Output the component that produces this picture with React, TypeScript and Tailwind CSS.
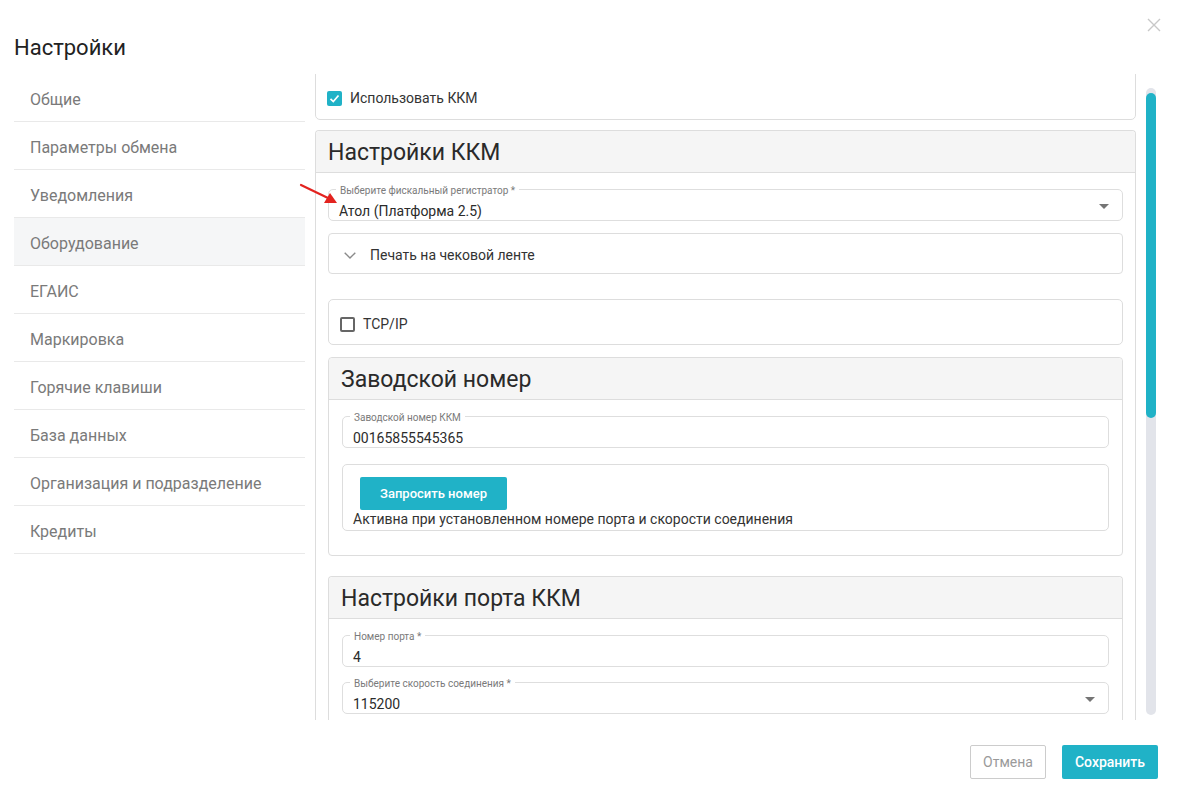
import React from "react";

const TEAL = "bg-[#20b2c7]";

function Field({ label, value, select }: { label: string; value: string; select?: boolean }) {
  return (
    <div className="relative h-[32px] rounded-[5px] border border-[#dedede] flex items-end pb-[1px] pl-[10px]">
      <span className="absolute -top-[5px] left-[7px] bg-white px-[4px] text-[10px] leading-[12px] text-[#7a7a7a]">
        {label}
      </span>
      <span className="text-[14px] leading-[16px] text-[#2b2b2b]">{value}</span>
      {select && (
        <svg className="absolute right-[13px] top-[14px]" width="10" height="5" viewBox="0 0 10 5">
          <path d="M0 0 L10 0 L5 5 Z" fill="#757575" />
        </svg>
      )}
    </div>
  );
}

function Card({ title, children, className = "" }: { title: string; children: React.ReactNode; className?: string }) {
  return (
    <div className={"rounded-[4px] border border-[#dddddd] " + className}>
      <div className="h-[42px] bg-[#f5f5f5] border-b border-[#dddddd] flex items-center pl-[12px] pt-[2px] rounded-t-[4px]">
        <span className="text-[23px] leading-[28px] text-[#2a2a2a]">{title}</span>
      </div>
      {children}
    </div>
  );
}

export default function App() {
  const items = [
    "Общие",
    "Параметры обмена",
    "Уведомления",
    "Оборудование",
    "ЕГАИС",
    "Маркировка",
    "Горячие клавиши",
    "База данных",
    "Организация и подразделение",
    "Кредиты",
  ];
  return (
    <div className="relative w-[1179px] h-[800px] bg-white font-['Roboto',sans-serif] text-[#2b2b2b] overflow-hidden">
      {/* Header */}
      <div className="h-[74px] pl-[14px] pt-[34px]">
        <h1 className="text-[22px] leading-[28px] text-[#222]">Настройки</h1>
      </div>
      <button className="absolute left-[1147px] top-[18px] w-[14px] h-[14px]">
        <svg width="14" height="14" viewBox="0 0 14 14">
          <path d="M1 1 L13 13 M13 1 L1 13" stroke="#c8c8c8" strokeWidth="1.4" />
        </svg>
      </button>

      {/* Body */}
      <div className="flex h-[646px]">
        {/* Sidebar */}
        <div className="ml-[14px] w-[291px] shrink-0">
          {items.map((it, i) => (
            <div
              key={it}
              className={
                "h-[48px] border-b border-[#e9e9e9] flex items-center pl-[16px] pt-[4px] text-[16px] text-[#7a7a7a] " +
                (i === 3 ? "bg-[#f5f6f7]" : "")
              }
            >
              {it}
            </div>
          ))}
        </div>

        {/* Content */}
        <div className="relative ml-[10px] w-[821px] shrink-0 overflow-hidden">
          <div className="-mt-[10px] h-[56px] rounded-[5px] border border-[#dddddd] flex items-center pl-[11px] pt-[12px]">
            <span className={"w-[15px] h-[15px] rounded-[2px] flex items-center justify-center " + TEAL}>
              <svg width="11" height="11" viewBox="0 0 11 11">
                <path d="M1.5 5.8 L4.3 8.5 L9.5 2.5" stroke="white" strokeWidth="1.7" fill="none" />
              </svg>
            </span>
            <span className="ml-[8px] text-[14px] text-[#333]">Использовать ККМ</span>
          </div>

          <Card title="Настройки ККМ" className="mt-[10px] border-b-0 rounded-b-none">
            <div className="px-[12px] pt-[16px]">
              <Field label="Выберите фискальный регистратор *" value="Атол (Платформа 2.5)" select />

              <div className="mt-[12px] h-[41px] rounded-[4px] border border-[#dddddd] flex items-center pl-[15px] pt-[3px]">
                <svg width="12" height="7" viewBox="0 0 12 7">
                  <path d="M0.7 0.7 L6 6 L11.3 0.7" stroke="#8a8a8a" strokeWidth="1.4" fill="none" />
                </svg>
                <span className="ml-[14px] text-[14px] text-[#333]">Печать на чековой ленте</span>
              </div>

              <div className="mt-[25px] h-[46px] rounded-[5px] border border-[#dddddd] flex items-center pl-[11px] pt-[4px]">
                <span className="w-[15px] h-[15px] rounded-[2px] border-2 border-[#666]" />
                <span className="ml-[8px] text-[14px] text-[#333]">TCP/IP</span>
              </div>

              <Card title="Заводской номер" className="mt-[12px]">
                <div className="px-[13px] pt-[16px] pb-[24px]">
                  <Field label="Заводской номер ККМ" value="00165855545365" />
                  <div className="mt-[16px] h-[67px] rounded-[5px] border border-[#dddddd] pl-[10px]">
                    <button
                      className={
                        "mt-[12px] ml-[7px] h-[33px] w-[147px] rounded-[2px] text-white text-[13px] font-medium " + TEAL
                      }
                    >
                      Запросить номер
                    </button>
                    <div className="text-[14px] leading-[18px] text-[#333]">
                      Активна при установленном номере порта и скорости соединения
                    </div>
                  </div>
                </div>
              </Card>

              <Card title="Настройки порта ККМ" className="mt-[20px] border-b-0 rounded-b-none">
                <div className="px-[13px] pt-[16px] pb-[10px]">
                  <Field label="Номер порта *" value="4" />
                  <div className="mt-[15px]">
                    <Field label="Выберите скорость соединения *" value="115200" select />
                  </div>
                </div>
              </Card>
            </div>
          </Card>
        </div>

        {/* Scrollbar */}
        <div className="ml-[10px] mt-[14px] w-[10px] h-[627px] rounded-full bg-[#e2e4ea]">
          <div className={"mt-[5px] h-[325px] rounded-full " + TEAL} />
        </div>
      </div>

      {/* Red arrow */}
      <svg className="absolute left-[296px] top-[178px]" width="48" height="32" viewBox="0 0 48 32">
        <path d="M5 7 L32 20" stroke="#e3231f" strokeWidth="2.2" strokeLinecap="round" />
        <path d="M41 25 L28 25 L34 15 Z" fill="#e3231f" />
      </svg>

      {/* Footer */}
      <div className="flex justify-end gap-[16px] pr-[21px] pt-[25px]">
        <button className="h-[34px] w-[76px] border border-[#cccccc] rounded-[2px] text-[14px] text-[#9a9a9a]">
          Отмена
        </button>
        <button className={"h-[34px] w-[96px] rounded-[2px] text-[14px] font-medium text-white " + TEAL}>
          Сохранить
        </button>
      </div>
    </div>
  );
}
